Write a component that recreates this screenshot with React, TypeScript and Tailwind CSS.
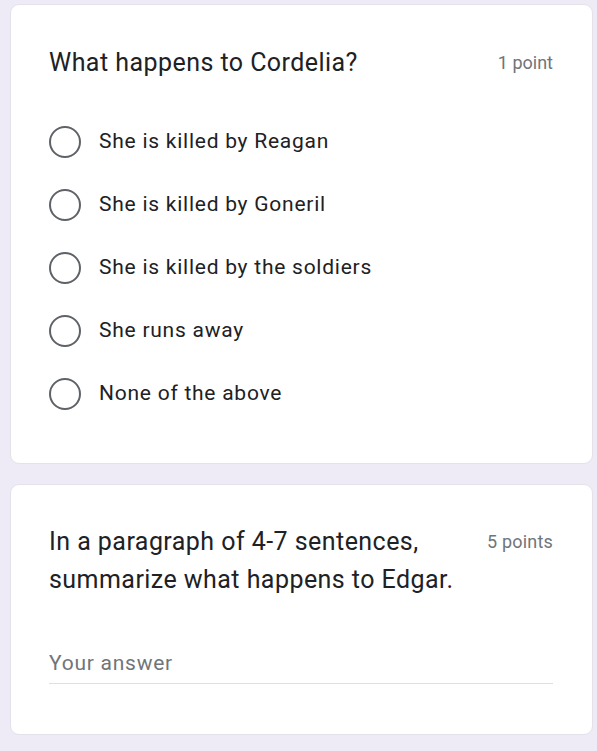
const OPTIONS = [
  "She is killed by Reagan",
  "She is killed by Goneril",
  "She is killed by the soldiers",
  "She runs away",
  "None of the above",
];

function Radio() {
  return (
    <span className="w-[32px] h-[32px] rounded-full border-[2.5px] border-[#5f6368] shrink-0" />
  );
}

export default function App() {
  return (
    <div className="min-h-[751px] bg-[#eeebf7] pt-[4px] pl-[10px] pr-[4px] pb-[17px] flex flex-col gap-[20px] font-['Roboto',sans-serif] text-[#202124]">
      {/* multiple choice */}
      <div className="bg-white rounded-[9px] border border-[#e3e1ea] pt-[42px] pb-[38px] pl-[38px] pr-[39px]">
        <div className="flex items-start justify-between">
          <div className="text-[25px] leading-[32px] tracking-[0.45px]">What happens to Cordelia?</div>
          <div className="text-[18px] leading-[32px] text-[#70757a] ml-6">1 point</div>
        </div>
        <div className="mt-[31px] flex flex-col">
          {OPTIONS.map((o) => (
            <label key={o} className="h-[63px] flex items-center gap-[18px]">
              <Radio />
              <span className="text-[21px] tracking-[0.75px]">{o}</span>
            </label>
          ))}
        </div>
      </div>

      {/* paragraph */}
      <div className="bg-white rounded-[9px] border border-[#e3e1ea] pt-[38px] pb-[50px] pl-[38px] pr-[39px]">
        <div className="flex items-start justify-between">
          <div className="flex-1 text-[25px] leading-[38px] tracking-[0.45px] mr-[12px]">
            In a paragraph of 4-7 sentences, summarize what happens to Edgar.
          </div>
          <div className="text-[18px] leading-[38px] text-[#70757a] tracking-[0.2px]">5 points</div>
        </div>
        <div className="mt-[50px] border-b-[1.5px] border-[#dfdee4] pb-[6px] text-[21px] leading-[28px] text-[#70757a] tracking-[0.75px]">
          Your answer
        </div>
      </div>
    </div>
  );
}
